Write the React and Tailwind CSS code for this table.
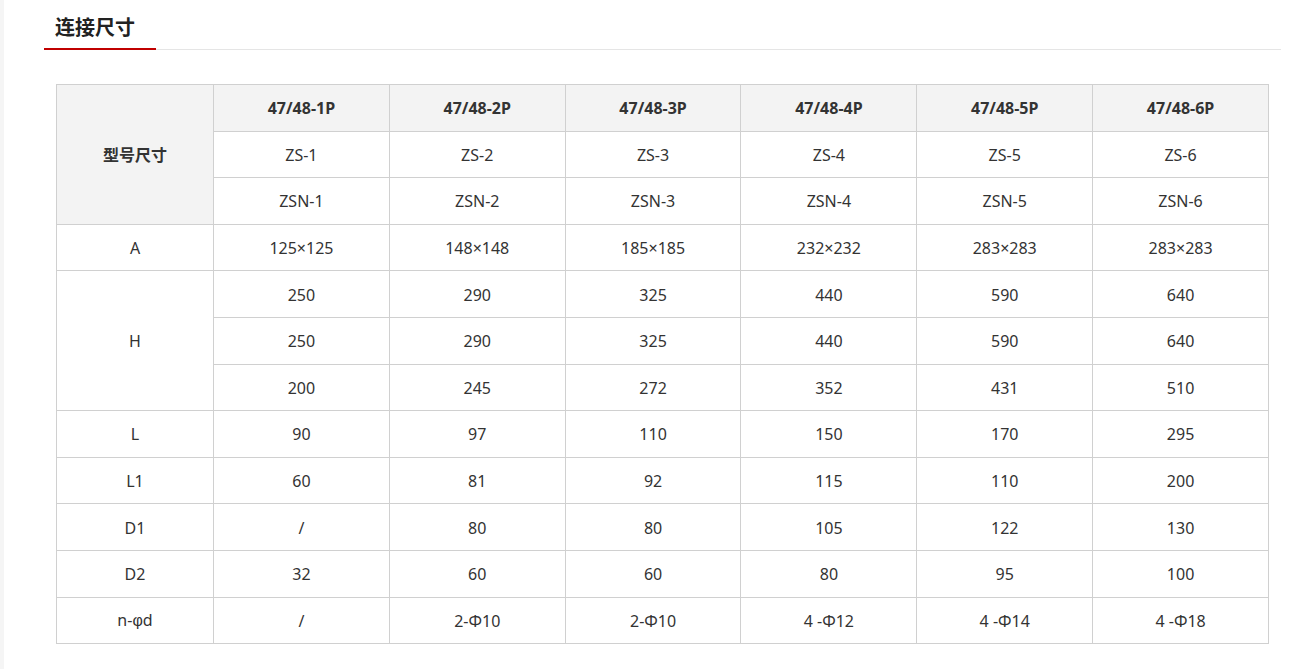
const models = ["47/48-1P", "47/48-2P", "47/48-3P", "47/48-4P", "47/48-5P", "47/48-6P"];
const zs = ["ZS-1", "ZS-2", "ZS-3", "ZS-4", "ZS-5", "ZS-6"];
const zsn = ["ZSN-1", "ZSN-2", "ZSN-3", "ZSN-4", "ZSN-5", "ZSN-6"];

const rows = [
  { label: "A", span: 1, values: ["125×125", "148×148", "185×185", "232×232", "283×283", "283×283"] },
  { label: "H", span: 3, values: ["250", "290", "325", "440", "590", "640"] },
  { values: ["250", "290", "325", "440", "590", "640"] },
  { values: ["200", "245", "272", "352", "431", "510"] },
  { label: "L", span: 1, values: ["90", "97", "110", "150", "170", "295"] },
  { label: "L1", span: 1, values: ["60", "81", "92", "115", "110", "200"] },
  { label: "D1", span: 1, values: ["/", "80", "80", "105", "122", "130"] },
  { label: "D2", span: 1, values: ["32", "60", "60", "80", "95", "100"] },
  {
    label: (
      <>
        n-<span style={{ fontFamily: '"Liberation Sans", sans-serif' }}>φ</span>d
      </>
    ),
    span: 1,
    values: ["/", "2-Φ10", "2-Φ10", "4 -Φ12", "4 -Φ14", "4 -Φ18"],
  },
];

const cell = "border border-[#d0d0d0] text-center align-middle p-0 pt-px";

export default function App() {
  return (
    <div
      className="flex min-h-[669px] bg-white text-[#333]"
      style={{ fontFamily: '"Noto Sans", "Noto Sans CJK SC", sans-serif' }}
    >
      <div className="w-[4px] shrink-0 bg-[#f5f5f5]" />

      <section className="ml-[40px] w-[1237px]">
        {/* title tab */}
        <div className="flex border-b border-[#e5e5e5]">
          <h2 className="-mb-px w-[112px] border-b-2 border-[#c00000] pl-[11px] pt-[14px] pb-[6px] text-[20px] leading-[28px] font-bold text-[#222]">
            连接尺寸
          </h2>
        </div>

        <div className="mt-[34px] px-[12px]">
          <table className="w-full table-fixed border-collapse text-[16px]">
            <colgroup>
              <col className="w-[157px]" />
              <col />
              <col />
              <col />
              <col />
              <col />
              <col />
            </colgroup>
            <tbody>
              <tr className="h-[46.6px]">
                <td rowSpan={3} className={`${cell} bg-[#f3f3f3] font-bold`}>
                  型号尺寸
                </td>
                {models.map((m) => (
                  <td key={m} className={`${cell} bg-[#f3f3f3] font-bold`}>
                    {m}
                  </td>
                ))}
              </tr>
              <tr className="h-[46.6px]">
                {zs.map((m) => (
                  <td key={m} className={cell}>
                    {m}
                  </td>
                ))}
              </tr>
              <tr className="h-[46.6px]">
                {zsn.map((m) => (
                  <td key={m} className={cell}>
                    {m}
                  </td>
                ))}
              </tr>
              {rows.map((r, i) => (
                <tr key={i} className="h-[46.6px]">
                  {r.label && (
                    <td rowSpan={r.span} className={cell}>
                      {r.label}
                    </td>
                  )}
                  {r.values.map((v, j) => (
                    <td key={j} className={cell}>
                      {v}
                    </td>
                  ))}
                </tr>
              ))}
            </tbody>
          </table>
        </div>
      </section>
    </div>
  );
}
